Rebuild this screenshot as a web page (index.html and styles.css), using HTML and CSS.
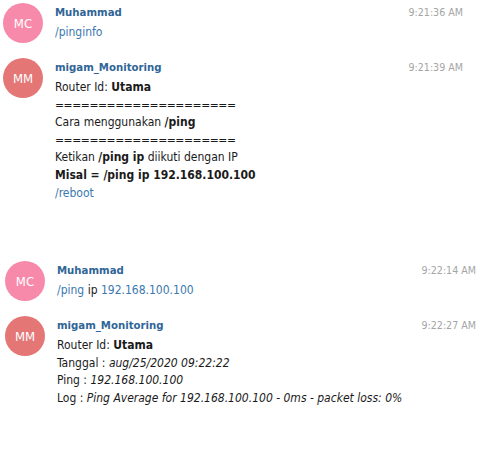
FILE: index.html
```html
<!DOCTYPE html>
<html>
<head>
<meta charset="utf-8">
<link rel="stylesheet" href="styles.css">
</head>
<body>
<div class="chat">
  <section class="group group-a">
    <div class="msg">
      <div class="avatar av-mc">MC</div>
      <div class="content">
        <div class="head"><span class="name">Muhammad</span><span class="time">9:21:36 AM</span></div>
        <div class="line"><span class="link">/pinginfo</span></div>
      </div>
    </div>
    <div class="msg">
      <div class="avatar av-mm">MM</div>
      <div class="content">
        <div class="head"><span class="name">migam_Monitoring</span><span class="time">9:21:39 AM</span></div>
        <div class="line">Router Id: <b>Utama</b></div>
        <div class="line rule">=====================</div>
        <div class="line">Cara menggunakan <b>/ping</b></div>
        <div class="line rule">=====================</div>
        <div class="line">Ketikan <b>/ping ip</b> diikuti dengan IP</div>
        <div class="line"><b>Misal = /ping ip 192.168.100.100</b></div>
        <div class="line"><span class="link">/reboot</span></div>
      </div>
    </div>
  </section>
  <section class="group group-b">
    <div class="msg">
      <div class="avatar av-mc">MC</div>
      <div class="content">
        <div class="head"><span class="name">Muhammad</span><span class="time">9:22:14 AM</span></div>
        <div class="line"><span class="link">/ping</span> ip <span class="link">192.168.100.100</span></div>
      </div>
    </div>
    <div class="msg">
      <div class="avatar av-mm">MM</div>
      <div class="content">
        <div class="head"><span class="name">migam_Monitoring</span><span class="time">9:22:27 AM</span></div>
        <div class="line">Router Id: <b>Utama</b></div>
        <div class="line">Tanggal : <i>aug/25/2020 09:22:22</i></div>
        <div class="line">Ping : <i>192.168.100.100</i></div>
        <div class="line">Log : <i>Ping Average for 192.168.100.100 - 0ms - packet loss: 0%</i></div>
      </div>
    </div>
  </section>
</div>
</body>
</html>
```

FILE: styles.css
```css
html, body {
  margin: 0;
  padding: 0;
  background: #ffffff;
}
body {
  font-family: "DejaVu Sans Condensed", "DejaVu Sans", sans-serif;
  font-stretch: condensed;
  font-size: 12px;
  color: #1a1a1a;
}
.chat {
  display: flex;
  flex-direction: column;
}
.group {
  display: flex;
  flex-direction: column;
}
.group-a {
  padding: 3px 31px 0 3px;
  gap: 15px;
}
.group-b {
  margin-top: 59px;
  padding: 0 18px 0 5px;
  gap: 15px;
}
.msg {
  display: flex;
  align-items: flex-start;
  gap: 12px;
}
.avatar {
  width: 40px;
  height: 40px;
  flex: 0 0 40px;
  border-radius: 50%;
  color: #fff;
  font-size: 13px;
  display: flex;
  align-items: center;
  justify-content: center;
}
.av-mc { background: #f78aaa; }
.av-mm { background: #e47676; }
.content {
  flex: 1;
  min-width: 0;
}
.head {
  display: flex;
  justify-content: space-between;
  align-items: center;
  height: 18px;
  margin-bottom: 3px;
}
.name {
  font-weight: bold;
  font-size: 11.3px;
  color: #2f6597;
}
.time {
  color: #a5a5a5;
  font-size: 10.6px;
}
.line {
  line-height: 17.6px;
  white-space: nowrap;
}
.rule {
  letter-spacing: -0.45px;
}
.link {
  color: #3b78b0;
}
```
